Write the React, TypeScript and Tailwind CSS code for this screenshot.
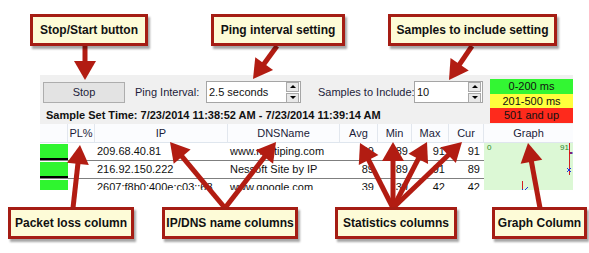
type ArrowProps = { x1: number; y1: number; x2: number; y2: number }

const Arrow = ({ x1, y1, x2, y2 }: ArrowProps) => {
  const dx = x2 - x1
  const dy = y2 - y1
  const len = Math.hypot(dx, dy)
  const ux = dx / len
  const uy = dy / len
  const hl = 19
  const hw = 11
  const bx = x2 - ux * hl
  const by = y2 - uy * hl
  const px = -uy
  const py = ux
  return (
    <g>
      <line x1={x1} y1={y1} x2={bx + ux * 2} y2={by + uy * 2} stroke="#b21c12" strokeWidth={5} />
      <polygon
        points={`${x2},${y2} ${bx + px * hw},${by + py * hw} ${bx - px * hw},${by - py * hw}`}
        fill="#b21c12"
      />
    </g>
  )
}

const arrows: ArrowProps[] = [
  { x1: 85, y1: 46, x2: 85, y2: 80 },
  { x1: 277, y1: 46, x2: 253, y2: 79 },
  { x1: 472, y1: 46, x2: 449, y2: 80 },
  { x1: 73, y1: 208, x2: 80, y2: 145 },
  { x1: 225, y1: 208, x2: 170, y2: 142 },
  { x1: 225, y1: 208, x2: 276, y2: 142 },
  { x1: 393, y1: 208, x2: 360, y2: 143 },
  { x1: 393, y1: 208, x2: 393, y2: 142 },
  { x1: 393, y1: 208, x2: 427, y2: 142 },
  { x1: 393, y1: 208, x2: 462, y2: 142 },
  { x1: 540, y1: 208, x2: 528, y2: 143 },
]

const Callout = ({ text, className }: { text: string; className: string }) => (
  <div
    className={
      'absolute h-[32px] flex items-center justify-center whitespace-nowrap border-[3px] border-[#a51d14] bg-[#fdfbd7] text-[12px] font-bold text-[#111] shadow-[2px_3px_2px_rgba(0,0,0,0.35)] ' +
      className
    }
  >
    {text}
  </div>
)

const Spinner = () => (
  <div className="flex flex-col gap-[1px] mr-[1px]">
    <div className="w-[13px] h-[10px] bg-[#e8e8e8] border border-[#a9a9a9] flex items-center justify-center">
      <div className="w-0 h-0 border-l-[3px] border-r-[3px] border-b-[3px] border-l-transparent border-r-transparent border-b-black" />
    </div>
    <div className="w-[13px] h-[10px] bg-[#e8e8e8] border border-[#a9a9a9] flex items-center justify-center">
      <div className="w-0 h-0 border-l-[3px] border-r-[3px] border-t-[3px] border-l-transparent border-r-transparent border-t-black" />
    </div>
  </div>
)

type Row = { ip: string; dns: string; avg: string; min: string; max: string; cur: string }

const rows: Row[] = [
  { ip: '209.68.40.81', dns: 'www.multiping.com', avg: '89', min: '89', max: '91', cur: '91' },
  { ip: '216.92.150.222', dns: 'Nessoft Site by IP', avg: '89', min: '89', max: '91', cur: '89' },
  { ip: '2607:f8b0:400e:c03::68', dns: 'www.google.com', avg: '39', min: '39', max: '42', cur: '42' },
]

const cell = 'h-[18px] border-b border-[#7f7f7f] flex items-center whitespace-nowrap overflow-hidden'
const num = cell + ' justify-end pr-[4px]'
const head =
  'h-[19px] flex items-center justify-center border-r border-[#e2e7ee] text-[#1c1c3a] bg-[#fbfcfe] border-b border-b-[#dfe6ee]'

const GraphCell = ({ i }: { i: number }) => (
  <div className="h-[18px] bg-[#dcf8d5] relative overflow-hidden">
    <svg width="89" height="18" className="block">
      {i === 0 && (
        <>
          <text x="3" y="7" fontSize="8" fill="#2b8a2b" fontFamily="Liberation Sans, Arial, sans-serif">0</text>
          <text x="76" y="7" fontSize="8" fill="#2b8a2b" fontFamily="Liberation Sans, Arial, sans-serif">91</text>
          <line x1="85.5" y1="0" x2="85.5" y2="18" stroke="#d42020" strokeWidth="1" />
          <rect x="85" y="9" width="3" height="2" fill="#e01010" />
          <line x1="86" y1="10" x2="89" y2="10" stroke="#2030e0" strokeWidth="1" />
        </>
      )}
      {i === 1 && (
        <>
          <line x1="85.5" y1="0" x2="85.5" y2="14" stroke="#d42020" strokeWidth="1" />
          <path d="M83 7 L87 11 M87 7 L83 11" stroke="#2030e0" strokeWidth="1" />
        </>
      )}
      {i === 2 && (
        <>
          <line x1="38.5" y1="2" x2="38.5" y2="10" stroke="#d42020" strokeWidth="1" />
          <path d="M38 10 L40 12 L44 8" stroke="#2030e0" strokeWidth="1" fill="none" />
        </>
      )}
    </svg>
  </div>
)

export default function App() {
  return (
    <div className="w-[589px] h-[253px] relative bg-white overflow-hidden font-['Liberation_Sans',Arial,sans-serif]">
      <div className="pt-[75px] pl-[40px]">
        <div className="w-[533px] h-[115px] bg-[#f0f0f0] overflow-hidden flex flex-col text-[11px] text-[#111]">
          <div className="flex h-[49px]">
            <div className="w-[450px] flex flex-col">
              <div className="flex items-center h-[22px] mt-[6px] whitespace-nowrap">
                <button className="ml-[3px] w-[82px] h-[21px] bg-[#e3e3e3] border border-[#adadad] text-[#1c1c3a] text-[11px]">
                  Stop
                </button>
                <span className="ml-[10px] w-[71px] text-[#1c1c3a]">Ping Interval:</span>
                <div className="w-[95px] h-[22px] bg-white border border-[#a5a5a5] flex items-center justify-between pl-[2px]">
                  <span>2.5 seconds</span>
                  <Spinner />
                </div>
                <span className="ml-[17px] w-[96px] text-[#1c1c3a]">Samples to Include:</span>
                <div className="w-[69px] h-[22px] bg-white border border-[#a5a5a5] flex items-center justify-between pl-[2px]">
                  <span>10</span>
                  <Spinner />
                </div>
              </div>
              <div className="mt-[5px] pl-[6px] h-[14px] leading-[14px] font-bold whitespace-nowrap">
                Sample Set Time: 7/23/2014 11:38:52 AM - 7/23/2014 11:39:14 AM
              </div>
            </div>
            <div className="w-[83px] mt-[4px] flex flex-col text-center">
              <div className="h-[15px] leading-[15px] bg-[#33f633]">0-200 ms</div>
              <div className="h-[14px] leading-[14px] bg-[#ffff3c]">201-500 ms</div>
              <div className="h-[15px] leading-[15px] bg-[#fe2a1c]">501 and up</div>
            </div>
          </div>
          <div className="mt-[1px] grid grid-cols-[28px_27px_133px_112px_38px_34px_37px_35px_89px] bg-white">
            <div className={head} />
            <div className={head}>PL%</div>
            <div className={head}>IP</div>
            <div className={head}>DNSName</div>
            <div className={head}>Avg</div>
            <div className={head}>Min</div>
            <div className={head}>Max</div>
            <div className={head}>Cur</div>
            <div className={head + ' border-r-0'}>Graph</div>
            {rows.map((r, i) => (
              <div key={i} className="contents">
                <div className="h-[18px] border-b border-[#7f7f7f]">
                  <div className="mt-[1px] h-[16px] bg-[#2ff52f] border-b-2 border-black" />
                </div>
                <div className={cell} />
                <div className={cell + ' pl-[2px]'}>{r.ip}</div>
                <div className={cell + ' pl-[2px]'}>{r.dns}</div>
                <div className={num}>{r.avg}</div>
                <div className={num}>{r.min}</div>
                <div className={num}>{r.max}</div>
                <div className={num}>{r.cur}</div>
                <GraphCell i={i} />
              </div>
            ))}
          </div>
        </div>
      </div>

      <svg width="589" height="253" className="absolute left-0 top-0 pointer-events-none">
        {arrows.map((a, i) => (
          <Arrow key={i} {...a} />
        ))}
      </svg>

      <Callout text="Stop/Start button" className="left-[30px] top-[14px] w-[118px]" />
      <Callout text="Ping interval setting" className="left-[211px] top-[14px] w-[134px]" />
      <Callout text="Samples to include setting" className="left-[388px] top-[14px] w-[169px]" />
      <Callout text="Packet loss column" className="left-[8px] top-[207px] w-[126px]" />
      <Callout text="IP/DNS name columns" className="left-[162px] top-[207px] w-[136px]" />
      <Callout text="Statistics columns" className="left-[335px] top-[207px] w-[122px]" />
      <Callout text="Graph Column" className="left-[492px] top-[207px] w-[95px]" />
    </div>
  )
}
